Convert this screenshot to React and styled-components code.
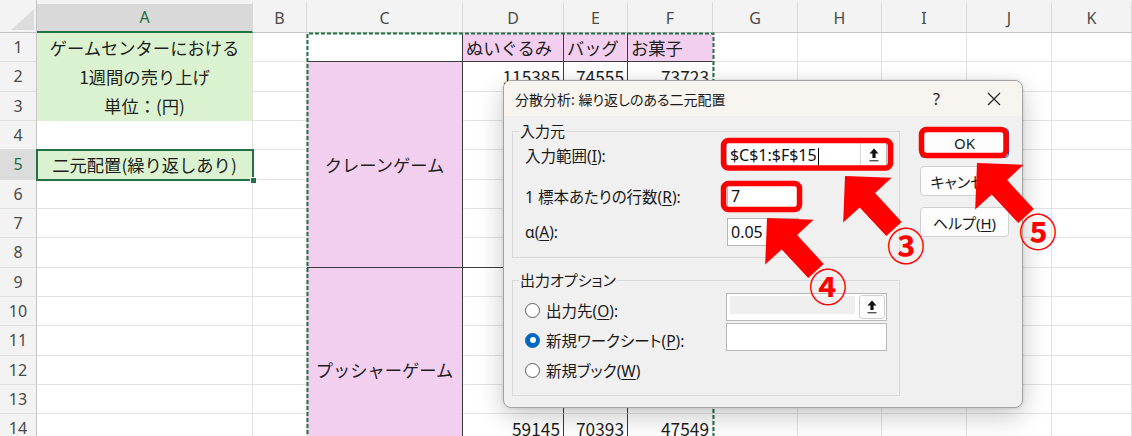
import React from 'react';
import styled, { createGlobalStyle } from 'styled-components';

const GlobalStyle = createGlobalStyle`
  html, body { margin: 0; padding: 0; background: #fff; }
  body { font-family: "Noto Sans", "Noto Sans CJK JP", sans-serif; }
  * { box-sizing: border-box; }
`;

const COLS = [37, 216, 54, 156, 101, 64, 85, 85, 84, 85, 85, 80];
const ROW_H = 29.333;
const DARK = '#3c3c3c';
const PINK = '#f2cfee';
const GREEN = '#daf2d0';
const GRID = '#e2e2e2';
const XL_GREEN = '#217346';
const RED = '#ff0000';

const Page = styled.div`
  position: relative;
  width: 1132px;
  height: 436px;
  overflow: hidden;
  background: #fff;
`;

const Sheet = styled.div`
  position: relative;
  display: grid;
  grid-template-columns: ${COLS.map((c) => c + 'px').join(' ')};
  grid-template-rows: 33px repeat(15, ${ROW_H}px);
  width: 1132px;
  font-family: "Noto Sans CJK JP", sans-serif;
`;

const Corner = styled.div`
  grid-row: 1;
  grid-column: 1;
  display: flex;
  align-items: flex-end;
  justify-content: flex-end;
  padding: 0 2px 2px 0;
  background: #f3f3f3;
  border-right: 1px solid #c4c4c4;
  border-bottom: 1px solid #c4c4c4;
`;

const CornerTriangle = styled.div`
  width: 0;
  height: 0;
  border-left: 23px solid transparent;
  border-bottom: 21px solid #dcdcdc;
`;

const ColHeader = styled.div`
  grid-row: 1;
  display: flex;
  align-items: center;
  justify-content: center;
  font-family: "Noto Sans", sans-serif;
  font-size: 16px;
  padding-bottom: 1px;
  color: ${(p) => (p.$active ? '#1e6e42' : '#4a4a4a')};
  background: ${(p) => (p.$active ? '#d9d9d9' : '#f3f3f3')};
  border-top: 4px solid #f3f3f3;
  border-right: 1px solid #dadada;
  border-bottom: ${(p) => (p.$active ? `2px solid ${XL_GREEN}` : '1px solid #c4c4c4')};
`;

const RowHeader = styled.div`
  grid-column: 1;
  display: flex;
  align-items: center;
  justify-content: center;
  font-family: "Noto Sans", sans-serif;
  font-size: 16px;
  color: ${(p) => (p.$active ? '#1e6e42' : '#4a4a4a')};
  background: ${(p) => (p.$active ? '#dcdcdc' : '#f3f3f3')};
  border-right: 1px solid #c4c4c4;
  border-bottom: 1px solid #dedede;
`;

const Cell = styled.div`
  grid-row: ${(p) => p.$row};
  grid-column: ${(p) => p.$col};
  display: flex;
  align-items: center;
  justify-content: ${(p) =>
    p.$align === 'right' ? 'flex-end' : p.$align === 'center' ? 'center' : 'flex-start'};
  padding: 0 3px;
  font-size: 17.3px;
  color: #1e1e1e;
  white-space: nowrap;
  overflow: hidden;
  background: ${(p) => p.$bg || '#fff'};
  border-right: 1px solid ${(p) => p.$br || GRID};
  border-bottom: 1px solid ${(p) => p.$bb || (p.$bg ? p.$bg : GRID)};
`;

const Marquee = styled.svg`
  position: absolute;
  left: 306px;
  top: 32px;
  overflow: visible;
  pointer-events: none;
`;

const Selection = styled.div`
  position: absolute;
  left: 36px;
  top: 149.3px;
  width: 218px;
  height: 31.4px;
  border: 2px solid ${XL_GREEN};
  pointer-events: none;
`;

const FillHandle = styled.div`
  position: absolute;
  right: -5px;
  bottom: -5px;
  width: 7px;
  height: 7px;
  background: ${XL_GREEN};
  border: 1px solid #fff;
`;

/* ---------- Dialog ---------- */

const Dialog = styled.div`
  position: absolute;
  left: 503px;
  top: 80px;
  width: 520px;
  height: 328px;
  display: flex;
  flex-direction: column;
  background: #f0f0f0;
  border: 1px solid #a3a3a3;
  border-radius: 8px;
  box-shadow: 0 8px 26px rgba(0, 0, 0, 0.22), 0 0 3px rgba(0, 0, 0, 0.15);
  overflow: hidden;
  font-family: "Noto Sans", "Noto Sans CJK JP", sans-serif;
  font-feature-settings: "palt";
  color: #1a1a1a;
`;

const TitleBar = styled.div`
  flex: 0 0 35px;
  display: flex;
  align-items: center;
  padding-left: 11px;
  background: #f8f4ef;
  font-size: 14px;
`;

const TitleText = styled.div`
  flex: 1;
`;

const TitleButton = styled.div`
  width: 57px;
  height: 35px;
  display: flex;
  align-items: center;
  justify-content: center;
  font-size: 16px;
  color: #222;
`;

const Body = styled.div`
  flex: 1;
  display: flex;
  gap: 20px;
  padding: 7px 13px 0 8px;
`;

const LeftColumn = styled.div`
  width: 388px;
  display: flex;
  flex-direction: column;
  gap: 14px;
`;

const Group = styled.fieldset`
  margin: 0;
  min-width: 0;
  height: ${(p) => p.$h}px;
  padding: 0 12px;
  border: 1px solid #d8d8d8;
  display: flex;
  flex-direction: column;
`;

const Legend = styled.legend`
  font-size: 15px;
  line-height: 16px;
  padding: 0 1px;
  margin-left: -6px;
`;

const FieldRow = styled.div`
  display: flex;
  align-items: center;
  height: 28px;
  margin-top: ${(p) => p.$mt}px;
`;

const FieldLabel = styled.div`
  width: 202px;
  font-size: 15.5px;
  white-space: nowrap;
  u { text-decoration-thickness: 1px; text-underline-offset: 2px; }
`;

const TextBox = styled.div`
  width: ${(p) => p.$w}px;
  height: 28px;
  display: flex;
  align-items: center;
  padding-left: 3px;
  background: #fff;
  border: 1px solid #b8b8b8;
  font-size: 16px;
  color: #111;
  margin-bottom: ${(p) => p.$lift || 0}px;
`;

const BoxText = styled.span`
  flex: 1;
  white-space: nowrap;
`;

const Caret = styled.span`
  display: inline-block;
  width: 1px;
  height: 18px;
  background: #000;
  vertical-align: middle;
  margin-left: 1px;
`;

const DisabledField = styled.div`
  flex: 1;
  align-self: stretch;
  margin: 2px 4px 6px 0;
  background: #efefef;
`;

const RefButton = styled.div`
  width: 26px;
  align-self: stretch;
  display: flex;
  align-items: center;
  justify-content: center;
  background: #fdfdfd;
  border-left: 1px solid #d6d6d6;
  border-radius: ${(p) => (p.$round ? '3px' : '0')};
  border: ${(p) => (p.$round ? '1px solid #d0d0d0' : undefined)};
  margin: ${(p) => (p.$round ? '1px 1px 1px 0' : '0')};
`;

const OptionRow = styled.div`
  display: flex;
  align-items: center;
  height: 30px;
  margin-top: ${(p) => p.$mt || 0}px;
`;

const RadioLabel = styled.div`
  width: 202px;
  display: flex;
  align-items: center;
  gap: 6px;
  font-size: 15.5px;
  white-space: nowrap;
  u { text-decoration-thickness: 1px; text-underline-offset: 2px; }
`;

const Radio = styled.span`
  flex: none;
  width: 15px;
  height: 15px;
  border-radius: 50%;
  border: 1px solid ${(p) => (p.$checked ? '#0067c0' : '#5c5c5c')};
  background: ${(p) => (p.$checked ? '#0067c0' : '#fff')};
  display: flex;
  align-items: center;
  justify-content: center;
  &::after {
    content: '';
    display: ${(p) => (p.$checked ? 'block' : 'none')};
    width: 6px;
    height: 6px;
    border-radius: 50%;
    background: #fff;
  }
`;

const ButtonColumn = styled.div`
  width: 89px;
  display: flex;
  flex-direction: column;
  padding-top: 5px;
`;

const DialogButton = styled.div`
  height: 30px;
  margin-top: ${(p) => p.$mt || 0}px;
  display: flex;
  align-items: center;
  justify-content: center;
  background: #fdfdfd;
  border: 1px solid ${(p) => (p.$default ? '#0067c0' : '#d0d0d0')};
  border-radius: 4px;
  font-size: 15px;
  color: #1a1a1a;
  u { text-decoration-thickness: 1px; text-underline-offset: 2px; }
`;

/* ---------- annotations ---------- */

const Annotations = styled.svg`
  position: absolute;
  left: 0;
  top: 0;
  pointer-events: none;
`;

const Badge = styled.span`
  position: absolute;
  left: ${(p) => p.$x}px;
  top: ${(p) => p.$y}px;
  transform: translate(-50%, -50%);
  font-family: "Noto Sans CJK JP", sans-serif;
  font-size: 38px;
  font-weight: 700;
  line-height: 1;
  color: ${RED};
`;

function arrowPoints(tx, ty, ex, ey, headLen = 33, headHalf = 33, shaftHalf = 10.5) {
  const dx = tx - ex;
  const dy = ty - ey;
  const len = Math.hypot(dx, dy);
  const ux = dx / len;
  const uy = dy / len;
  const px = -uy;
  const py = ux;
  const bx = tx - ux * headLen;
  const by = ty - uy * headLen;
  const pts = [
    [tx, ty],
    [bx + px * headHalf, by + py * headHalf],
    [bx + px * shaftHalf, by + py * shaftHalf],
    [ex + px * shaftHalf, ey + py * shaftHalf],
    [ex - px * shaftHalf, ey - py * shaftHalf],
    [bx - px * shaftHalf, by - py * shaftHalf],
    [bx - px * headHalf, by - py * headHalf],
  ];
  return pts.map(([x, y]) => `${x.toFixed(1)},${y.toFixed(1)}`).join(' ');
}

const ARROWS = [
  [845, 176, 894, 229],
  [767, 218, 816, 271],
  [977, 163, 1026, 216],
];

const FRAMES = [
  { x: 723.5, y: 140.5, w: 167, h: 27.5 },
  { x: 723.5, y: 183.5, w: 76, h: 26 },
  { x: 921.5, y: 129.5, w: 84.5, h: 26 },
];

/* ---------- data ---------- */

const LETTERS = ['A', 'B', 'C', 'D', 'E', 'F', 'G', 'H', 'I', 'J', 'K'];

const VALUES = {
  2: ['115385', '74555', '73723'],
  3: ['98412', '68230', '61587'],
  4: ['87654', '71209', '58843'],
  5: ['92310', '66418', '64122'],
  6: ['89577', '72964', '59981'],
  7: ['95120', '69533', '62307'],
  8: ['90248', '73418', '60775'],
  9: ['61208', '65870', '45312'],
  10: ['58734', '71026', '49855'],
  11: ['63412', '68195', '46908'],
  12: ['57029', '72341', '48210'],
  13: ['60583', '69712', '44976'],
  14: ['59145', '70393', '47549'],
  15: ['62310', '67458', '46132'],
};

const A_TEXT = {
  1: 'ゲームセンターにおける',
  2: '1週間の売り上げ',
  3: '単位：(円)',
  5: '二元配置(繰り返しあり)',
};

function buildCells() {
  const cells = [];
  for (let r = 1; r <= 15; r++) {
    const row = r + 1;
    const aText = A_TEXT[r];
    cells.push(
      <Cell key={`A${r}`} $row={row} $col={2} $align="center" $bg={aText ? GREEN : undefined}>
        {aText || ''}
      </Cell>
    );
    cells.push(<Cell key={`B${r}`} $row={row} $col={3} />);
    if (r === 1) {
      cells.push(<Cell key="C1" $row={row} $col={4} $br={DARK} $bb={DARK} />);
    } else if (r === 2) {
      cells.push(
        <Cell key="C2" $row={`${row} / span 7`} $col={4} $align="center" $bg={PINK} $br={DARK} $bb={DARK}>
          クレーンゲーム
        </Cell>
      );
    } else if (r === 9) {
      cells.push(
        <Cell key="C9" $row={`${row} / span 7`} $col={4} $align="center" $bg={PINK} $br={DARK} $bb={DARK}>
          プッシャーゲーム
        </Cell>
      );
    }
    if (r === 1) {
      ['ぬいぐるみ', 'バッグ', 'お菓子'].forEach((t, i) => (
        cells.push(
          <Cell key={`H${i}`} $row={row} $col={5 + i} $bg={PINK} $br={i < 2 ? DARK : PINK} $bb={DARK}>
            {t}
          </Cell>
        )
      ));
    } else {
      VALUES[r].forEach((v, i) => (
        cells.push(
          <Cell
            key={`V${r}-${i}`}
            $row={row}
            $col={5 + i}
            $align="right"
            $br={i < 2 ? DARK : undefined}
            $bb={r === 8 || r === 15 ? DARK : undefined}
          >
            {v}
          </Cell>
        )
      ));
    }
    for (let c = 8; c <= 12; c++) {
      cells.push(<Cell key={`X${r}-${c}`} $row={row} $col={c} />);
    }
  }
  return cells;
}

function RefIcon() {
  return (
    <svg width="10" height="14" viewBox="0 0 10 14">
      <path d="M5 0.5 L9.5 5.5 H6.6 V10 H3.4 V5.5 H0.5 Z" fill="#111" />
      <rect x="0.5" y="12" width="9" height="1.4" fill="#555" />
    </svg>
  );
}

function CloseIcon() {
  return (
    <svg width="14" height="14" viewBox="0 0 14 14">
      <path d="M1 1 L13 13 M13 1 L1 13" stroke="#222" strokeWidth="1.2" fill="none" />
    </svg>
  );
}

export default function App() {
  return (
    <Page>
      <GlobalStyle />
      <Sheet>
        <Corner>
          <CornerTriangle />
        </Corner>
        {LETTERS.map((l, i) => (
          <ColHeader key={l} $active={l === 'A'} style={{ gridColumn: i + 2 }}>
            {l}
          </ColHeader>
        ))}
        {Array.from({ length: 15 }, (_, i) => (
          <RowHeader key={i} $active={i === 4} style={{ gridRow: i + 2 }}>
            {i + 1}
          </RowHeader>
        ))}
        {buildCells()}
        <Marquee width="409" height="420">
          <path
            d="M1.5 420 V1.5 H407.5 V420"
            fill="none"
            stroke={XL_GREEN}
            strokeWidth="2"
            strokeDasharray="4 2"
          />
        </Marquee>
        <Selection>
          <FillHandle />
        </Selection>
      </Sheet>

      <Dialog>
        <TitleBar>
          <TitleText>分散分析: 繰り返しのある二元配置</TitleText>
          <TitleButton>?</TitleButton>
          <TitleButton>
            <CloseIcon />
          </TitleButton>
        </TitleBar>
        <Body>
          <LeftColumn>
            <Group $h={135}>
              <Legend>入力元</Legend>
              <FieldRow $mt={2}>
                <FieldLabel>
                  入力範囲(<u>I</u>):
                </FieldLabel>
                <TextBox $w={162}>
                  <BoxText>
                    $C$1:$F$15
                    <Caret />
                  </BoxText>
                  <RefButton>
                    <RefIcon />
                  </RefButton>
                </TextBox>
              </FieldRow>
              <FieldRow $mt={13}>
                <FieldLabel>
                  1 標本あたりの行数(<u>R</u>):
                </FieldLabel>
                <TextBox $w={72}>7</TextBox>
              </FieldRow>
              <FieldRow $mt={8}>
                <FieldLabel>
                  α(<u>A</u>):
                </FieldLabel>
                <TextBox $w={72}>0.05</TextBox>
              </FieldRow>
            </Group>
            <Group $h={124}>
              <Legend>出力オプション</Legend>
              <OptionRow $mt={7}>
                <RadioLabel>
                  <Radio />
                  <span>
                    出力先(<u>O</u>):
                  </span>
                </RadioLabel>
                <TextBox $w={162} $lift={7}>
                  <DisabledField />
                  <RefButton $round>
                    <RefIcon />
                  </RefButton>
                </TextBox>
              </OptionRow>
              <OptionRow>
                <RadioLabel>
                  <Radio $checked />
                  <span>
                    新規ワークシート(<u>P</u>):
                  </span>
                </RadioLabel>
                <TextBox $w={162} $lift={7} />
              </OptionRow>
              <OptionRow>
                <RadioLabel>
                  <Radio />
                  <span>
                    新規ブック(<u>W</u>)
                  </span>
                </RadioLabel>
              </OptionRow>
            </Group>
          </LeftColumn>
          <ButtonColumn>
            <DialogButton $default>OK</DialogButton>
            <DialogButton $mt={8}>キャンセル</DialogButton>
            <DialogButton $mt={11}>
              <span>
                ヘルプ(<u>H</u>)
              </span>
            </DialogButton>
          </ButtonColumn>
        </Body>
      </Dialog>

      <Annotations width="1132" height="436" viewBox="0 0 1132 436">
        {FRAMES.map((f, i) => (
          <rect
            key={i}
            x={f.x}
            y={f.y}
            width={f.w}
            height={f.h}
            rx="5"
            fill="none"
            stroke={RED}
            strokeWidth="5.5"
          />
        ))}
        {ARROWS.map((a, i) => (
          <polygon key={i} points={arrowPoints(...a)} fill={RED} />
        ))}
      </Annotations>
      <Badge $x={906} $y={244}>③</Badge>
      <Badge $x={828} $y={285}>④</Badge>
      <Badge $x={1038} $y={230}>⑤</Badge>
    </Page>
  );
}
